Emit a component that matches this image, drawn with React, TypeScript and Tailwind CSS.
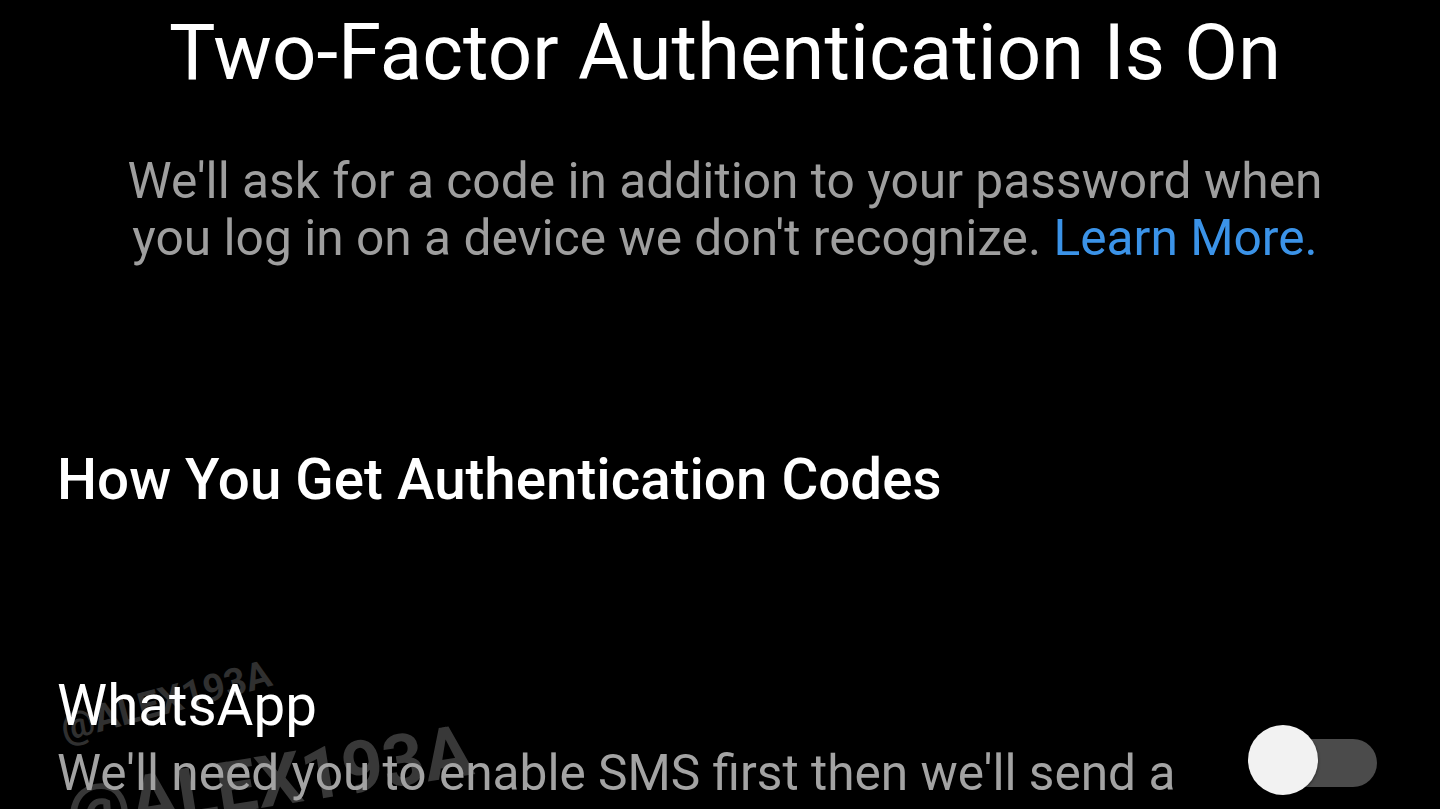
export default function App() {
  return (
    <div
      className="relative h-[809px] w-[1440px] overflow-hidden bg-black text-white"
      style={{ fontFamily: 'Roboto, "Noto Sans", sans-serif' }}
    >
      {/* watermark */}
      <div className="pointer-events-none absolute left-[66px] top-[709px] origin-bottom-left -rotate-[15deg] text-[38px] font-bold leading-none text-[#303030]">
        @ALEX193A
      </div>
      <div className="pointer-events-none absolute left-[72px] top-[778px] origin-bottom-left -rotate-[9deg] text-[72px] font-bold leading-none text-[#383838]">
        @ALEX193A
      </div>

      <div className="relative z-10 flex flex-col">
        <div className="flex flex-col items-center pl-[10px]">
          <h1 className="mt-[10px] whitespace-nowrap text-[78px] leading-[86px]">
            Two-Factor Authentication Is On
          </h1>
          <p className="mt-[57px] whitespace-nowrap text-center text-[49.7px] leading-[57px] text-[#9e9e9e]">
            We'll ask for a code in addition to your password when
            <br />
            you log in on a device we don't recognize.{" "}
            <span className="text-[#3b93e8]">Learn More.</span>
          </p>
        </div>

        <h2 className="mt-[180px] pl-[57px] text-[56.5px] font-medium leading-[66px]">
          How You Get Authentication Codes
        </h2>

        <div className="mt-[160px] flex items-start gap-10 pl-[57px] pr-[63px]">
          <div className="min-w-0 flex-1">
            <div className="text-[56.5px] leading-[66px]">WhatsApp</div>
            <div className="mt-[6px] whitespace-nowrap text-[49.6px] leading-[57px] text-[#a3a3a3]">
              We'll need you to enable SMS first then we'll send a
            </div>
          </div>
          <div className="relative mt-[52px] h-[70px] w-[130px] shrink-0">
            <div className="absolute right-0 top-[14px] h-[48px] w-[104px] rounded-full bg-[#4b4b4b]" />
            <div className="absolute left-[1px] top-0 h-[70px] w-[70px] rounded-full bg-[#f2f2f2] shadow-[0_1px_3px_rgba(0,0,0,0.5)]" />
          </div>
        </div>
      </div>
    </div>
  );
}
